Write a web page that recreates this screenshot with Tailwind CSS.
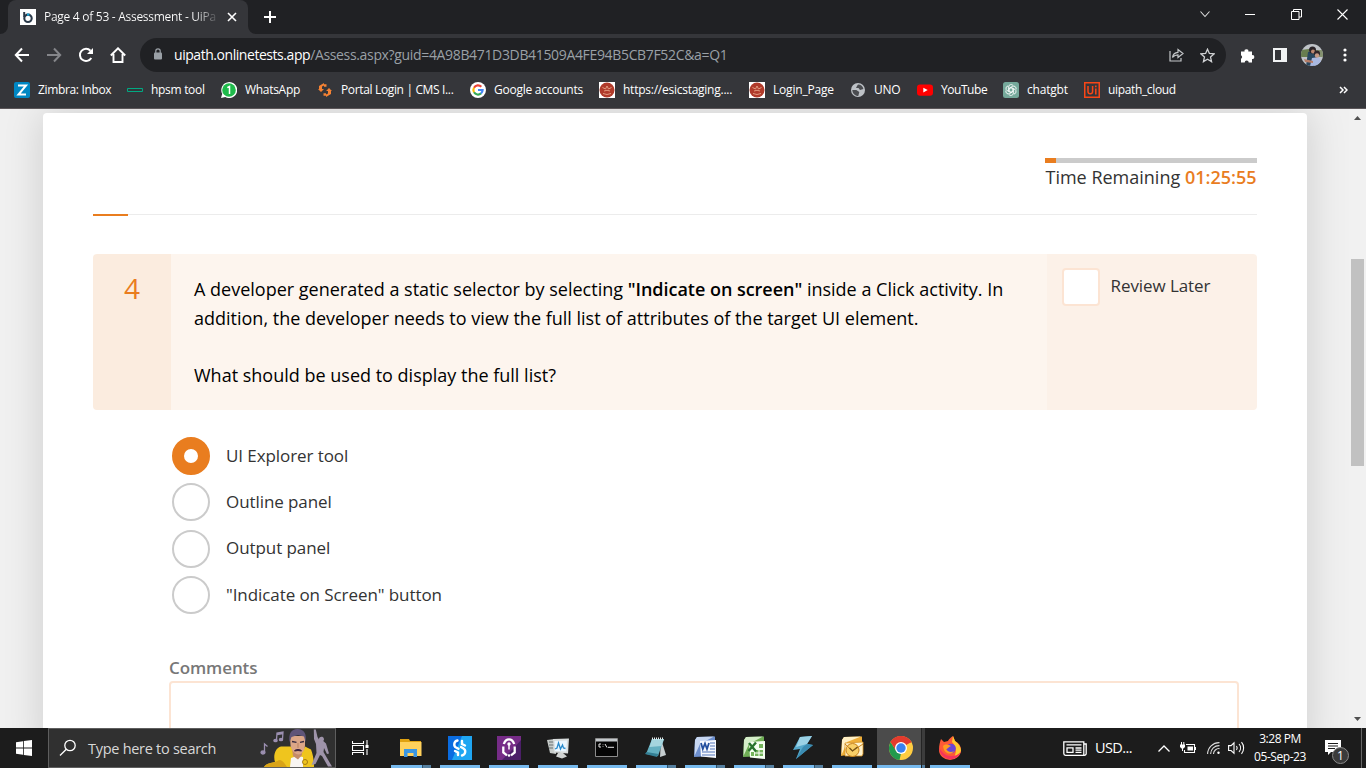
<!DOCTYPE html>
<html lang="en">
<head>
<meta charset="utf-8">
<title>Page 4 of 53 - Assessment - UiPath</title>
<script src="https://cdn.jsdelivr.net/npm/@tailwindcss/browser@4"></script>
</head>
<body class="w-[1366px] h-[768px] overflow-hidden flex flex-col bg-[#f0f0f0] font-['Open_Sans','Noto_Sans',sans-serif]">

<!-- Tab strip -->
<header class="h-[34px] shrink-0 bg-[#202124] flex items-start text-white">
  <svg class="w-2 h-[34px] shrink-0" viewBox="0 0 8 34"><path d="M8 26v8H0a8 8 0 0 0 8-8z" fill="#35363a"/></svg>
  <div class="w-[240px] h-[34px] bg-[#35363a] rounded-t-lg flex items-center pl-3 pr-2">
    <svg class="w-4 h-4 shrink-0" viewBox="0 0 16 16"><path fill="#fff" d="M0 0h16v16H0z"/><path d="M4.2 3v5" stroke="#2b3a4a" stroke-width="2"/><circle cx="8" cy="9.3" r="3.7" fill="none" stroke="#2b3a4a" stroke-width="2.1"/><path d="M7 4.5h2.4v2.2H7z" fill="#19a3d6"/></svg>
    <span class="ml-2 w-[176px] h-4 leading-4 text-[12px] tracking-[-0.28px] whitespace-nowrap overflow-hidden bg-gradient-to-r from-white from-85% to-transparent bg-clip-text text-transparent">Page 4 of 53 - Assessment - UiPa</span>
    <svg class="w-[10px] h-[10px] ml-[7px] shrink-0" viewBox="0 0 10 10"><path d="M1 1l8 8M9 1l-8 8" stroke="#fff" stroke-width="1.6"/></svg>
  </div>
  <svg class="w-2 h-[34px] shrink-0" viewBox="0 0 8 34"><path d="M0 26v8h8a8 8 0 0 1-8-8z" fill="#35363a"/></svg>
  <svg class="w-3 h-3 mt-[11px] ml-2" viewBox="0 0 12 12"><path d="M6 0v12M0 6h12" stroke="#fff" stroke-width="2"/></svg>
  <div class="ml-auto mr-[18px] mt-2 flex items-center">
    <svg class="w-3 h-3 mr-[34px]" viewBox="0 0 12 12"><path d="M1.5 3.5L6 8.5l4.500-5" fill="none" stroke="#ddd" stroke-width="1.1"/></svg>
    <svg class="w-[10px] h-[10px] mr-[36px]" viewBox="0 0 10 10"><path d="M0 5.500h10" stroke="#fff"/></svg>
    <svg class="w-[11px] h-[11px] mr-[35px]" viewBox="0 0 11 11"><path d="M.5 2.500h7.500v8H.5zM2.500 2.500v-2h8v7.500H8" fill="none" stroke="#fff"/></svg>
    <svg class="w-[11px] h-[11px]" viewBox="0 0 11 11"><path d="M.5.5l10 10M10.500.5l-10 10" stroke="#fff" stroke-width="1.1"/></svg>
  </div>
</header>

<!-- Toolbar -->
<nav class="h-[42px] shrink-0 bg-[#35363a] flex items-center pl-[14px] pr-[16px]">
  <svg class="w-4 h-4" viewBox="0 0 16 16" fill="none" stroke="#fff" stroke-width="2"><path d="M15 8H2M8 1.500L1.800 8 8 14.500"/></svg>
  <svg class="w-4 h-4 ml-4" viewBox="0 0 16 16" fill="none" stroke="#85868a" stroke-width="2"><path d="M1 8h13M8 1.500L14.200 8 8 14.500"/></svg>
  <svg class="w-4 h-4 ml-4" viewBox="0 0 16 16"><path d="M13.300 11a6.100 6.100 0 1 1-.8-7.300" fill="none" stroke="#fff" stroke-width="2"/><path d="M15 1v6H9z" fill="#fff"/></svg>
  <svg class="w-4 h-4 ml-4" viewBox="0 0 16 16"><path d="M3.500 7v8h9V7M.8 8.500L8 1.300l7.200 7.200" fill="none" stroke="#fff" stroke-width="1.900"/></svg>
  <div class="ml-[14px] w-[1086px] h-[34px] rounded-full bg-[#202124] flex items-center pl-[14px] pr-[11px]">
    <svg class="w-2 h-3 shrink-0 -mt-[2px]" viewBox="0 0 8 12"><rect y="4.500" width="8" height="7" rx="1" fill="#9aa0a6"/><path d="M1.800 5V3a2.200 2.200 0 0 1 4.400 0v2" fill="none" stroke="#9aa0a6" stroke-width="1.200"/></svg>
    <span class="ml-3 text-[14px] leading-5 text-[#9aa0a6] whitespace-nowrap"><span class="text-white tracking-[-0.450px]">uipath.onlinetests.app</span><span class="tracking-[-0.340px]">/Assess.aspx?guid=4A98B471D3DB41509A4FE94B5CB7F52C&amp;a=Q1</span></span>
    <svg class="w-[15px] h-[14px] ml-auto" viewBox="0 0 15 14" fill="none" stroke="#c4c7c9" stroke-width="1.200"><path d="M1 3v10h11v-3M3.500 9.500C4 6 6 4.500 9 4.300V1.500L14 5.500 9 9.500V6.800C6.500 6.800 5 7.500 3.500 9.500z"/></svg>
    <svg class="w-[15px] h-[15px] ml-[16px]" viewBox="0 0 15 15"><path d="M7.500 1.200l1.900 4.300 4.600.4-3.500 3.100 1.050 4.600L7.500 11.200l-4.050 2.400L4.500 9 1 5.900l4.600-.4z" fill="none" stroke="#d0d2d4" stroke-width="1.300"/></svg>
  </div>
  <svg class="w-[15px] h-[15px] ml-[14px]" viewBox="0 0 15 15" fill="#fff"><path d="M1 3.500h3.600a1.900 1.900 0 1 1 3.700 0H12v3.700a1.900 1.900 0 1 1 0 3.700v3.600H8.700a2 2 0 0 0-4 0H1v-3.700a2 2 0 0 0 0-3.600z"/></svg>
  <svg class="w-[14px] h-[14px] ml-[18px]" viewBox="0 0 14 14"><path d="M0 0h14v14H0zM2 2v10h6V2z" fill="#f1f3f4" fill-rule="evenodd"/></svg>
  <svg class="w-[22px] h-[22px] ml-[14px]" viewBox="0 0 22 22"><defs><clipPath id="av"><circle cx="11" cy="11" r="11"/></clipPath></defs><g clip-path="url(#av)"><path fill="#bfc3c8" d="M0 0h22v22H0z"/><path d="M0 6l8-1v8H0z" fill="#687d4e"/><path d="M15 6h7v7h-7z" fill="#84916f"/><path d="M5 22l2-14 6-1 3 6-3 9z" fill="#28475f"/><circle cx="11.500" cy="6" r="3.500" fill="#292226"/><circle cx="12" cy="7.500" r="2" fill="#b98770"/><path d="M9 22l2-8 7-1 4 9z" fill="#a9b8e0"/><circle cx="16" cy="9.500" r="3" fill="#30262a"/><circle cx="16" cy="11.500" r="2.200" fill="#c59a86"/><path d="M3 15l9 2v2l-8-1z" fill="#b57d68"/></g></svg>
  <svg class="w-1 h-[14px] ml-auto mr-[3px]" viewBox="0 0 4 14" fill="#fff"><circle cx="2" cy="2" r="1.600"/><circle cx="2" cy="7" r="1.600"/><circle cx="2" cy="12" r="1.600"/></svg>
</nav>

<!-- Bookmarks -->
<nav class="h-[33px] shrink-0 bg-[#35363a] border-b border-[#5b5659] flex items-center gap-4 pl-[14px] pr-[17px] pb-[4px] text-[12px] text-white whitespace-nowrap leading-4">
  <div class="w-[97px] flex gap-2 tracking-[-0.350px]"><svg class="w-4 h-4 shrink-0" viewBox="0 0 16 16"><rect width="16" height="16" rx="2" fill="#0087c3"/><path d="M4 3.500h8L4.500 12.500H12" fill="none" stroke="#fff" stroke-width="2"/></svg>Zimbra: Inbox</div>
  <div class="w-[78px] flex gap-2 tracking-[-0.3px]"><svg class="w-4 h-4 shrink-0" viewBox="0 0 16 16"><path d="M.5 6.500h15v3H.5z" fill="none" stroke="#01a982"/></svg>hpsm tool</div>
  <div class="w-20 flex gap-2 tracking-[-0.3px]"><svg class="w-4 h-4 shrink-0" viewBox="0 0 16 16"><path d="M0 16l1.200-4.200A8 8 0 1 1 4.300 15z" fill="#fff"/><circle cx="8" cy="8" r="6.800" fill="#1fba4b"/><path d="M6.300 5.700L8.500 4.500V12" fill="none" stroke="#fff" stroke-width="1.500"/></svg>WhatsApp</div>
  <div class="w-[137px] flex gap-2 tracking-[-0.350px]"><svg class="w-4 h-4 shrink-0" viewBox="0 0 16 16" fill="#f58233"><path d="M2 4l5-3v2.500L5 4.500V7h2L4 10 1 7h1zM14 12l-5 3v-2.500l2-1V9H9l3-3 3 3h-1z"/><path d="M7 2.200h2.500v2.500H7zM6.500 11.300H9v2.500H6.500z"/></svg>Portal Login | CMS I...</div>
  <div class="w-[113px] flex gap-2 tracking-[-0.250px]"><svg class="w-4 h-4 shrink-0" viewBox="0 0 16 16" fill="none" stroke-width="2.200"><circle cx="8" cy="8" r="8" fill="#fff"/><path d="M11.300 4.800A4.600 4.600 0 0 0 4 5.700" stroke="#ea4335"/><path d="M4 5.700a4.600 4.600 0 0 0 0 4.600" stroke="#fbbc05"/><path d="M4 10.300a4.600 4.600 0 0 0 7 1.100" stroke="#34a853"/><path d="M11 11.400A4.600 4.600 0 0 0 12.600 8H8" stroke="#4285f4"/></svg>Google accounts</div>
  <div class="w-[134px] flex gap-2 tracking-[-0.250px]"><svg class="w-4 h-4 shrink-0" viewBox="0 0 16 16"><path fill="#fff" d="M0 0h16v16H0z"/><circle cx="8" cy="8" r="7.500" fill="#b03a2a"/><path d="M3.500 5.500l3 1.500L8 4l1.500 3 3-1.500M5 9q3-1.500 6 0M4 11.500q4 2 8 0" fill="none" stroke="#e39a80"/></svg>https://esicstaging....</div>
  <div class="w-[85px] flex gap-2 tracking-[-0.2px]"><svg class="w-4 h-4 shrink-0" viewBox="0 0 16 16"><path fill="#fff" d="M0 0h16v16H0z"/><circle cx="8" cy="8" r="7.500" fill="#b03a2a"/><path d="M3.500 5.500l3 1.500L8 4l1.500 3 3-1.500M5 9q3-1.500 6 0M4 11.500q4 2 8 0" fill="none" stroke="#e39a80"/></svg>Login_Page</div>
  <div class="w-[51px] flex gap-2 tracking-[-0.3px]"><svg class="w-4 h-4 shrink-0" viewBox="0 0 16 16"><circle cx="8" cy="8" r="7" fill="#bdc1c6"/><path d="M8 2.500c3 0 5 2 5.400 4.500L10 8 8.500 6H6l1-2zM2.300 8h4l3 2-1 4C5 14 2.500 11.500 2.300 8z" fill="#4a4c50"/></svg>UNO</div>
  <div class="w-[70px] flex gap-2 tracking-[-0.450px]"><svg class="w-4 h-4 shrink-0" viewBox="0 0 16 16"><rect y="2.500" width="16" height="11.200" rx="3" fill="#f00"/><path d="M6.300 5.700L10.700 8l-4.400 2.400z" fill="#fff"/></svg>YouTube</div>
  <div class="w-[65px] flex gap-2 tracking-[-0.2px]"><svg class="w-4 h-4 shrink-0" viewBox="0 0 16 16"><rect width="16" height="16" rx="2.500" fill="#75a99b"/><g fill="none" stroke="#fff" stroke-width=".8"><path id="k" d="M8 10.200L5.600 8.800V5a2.500 2.500 0 0 1 4.500-1.500"/><use href="#k" transform="rotate(60 8 8)"/><use href="#k" transform="rotate(120 8 8)"/><use href="#k" transform="rotate(180 8 8)"/><use href="#k" transform="rotate(240 8 8)"/><use href="#k" transform="rotate(300 8 8)"/></g></svg>chatgbt</div>
  <div class="w-[92px] flex gap-2 tracking-[-0.350px]"><svg class="w-4 h-4 shrink-0" viewBox="0 0 16 16" fill="none" stroke="#fa4616"><path d="M.75.75h14.500v14.500H.75z" stroke-width="1.500"/><path d="M4 4v5.500a2.300 2.300 0 0 0 4.600 0V4M11.800 6.500v6M11.800 3.500v1.700" stroke-width="1.500"/></svg>uipath_cloud</div>
  <svg class="w-[9px] h-2 ml-auto mr-px" viewBox="0 0 9 8" fill="none" stroke="#fff" stroke-width="1.500"><path d="M1 1l3 3-3 3M5 1l3 3-3 3"/></svg>
</nav>

<!-- Page viewport -->
<div class="h-[619px] shrink-0 flex overflow-hidden">
  <main class="w-[1349px] h-full overflow-hidden pl-[43px] pt-1">
    <div class="w-[1264px] h-[640px] bg-white rounded-t shadow-[0_0_40px_rgba(0,0,0,0.15)] px-[50px] pt-[45px]">
      <div class="w-[212px] ml-auto">
        <div class="h-[5px] bg-[#cbcbcb]"><div class="w-[11px] h-full bg-[#e97d1f]"></div></div>
        <p class="h-[29px] leading-[29px] pl-[0.500px] text-[18px] text-[#333] whitespace-nowrap">Time Remaining <span class="font-semibold text-[#e97d1f]">01:25:55</span></p>
      </div>
      <div class="mt-[22px] h-[2px] flex items-start"><div class="w-[35px] h-[2px] bg-[#e97d1f]"></div><div class="flex-1 h-px bg-[#ececec]"></div></div>

      <section class="mt-[38px] h-[156px] rounded flex overflow-hidden">
        <div class="w-[78px] bg-[#fbecdf] text-center text-[28px] leading-[28px] pt-[20px] font-medium text-[#e97d1f]">4</div>
        <div class="w-[876px] bg-[#fdf5ee] pl-[23px] pt-[21px] text-[18px] leading-[28.8px] text-black whitespace-nowrap">A developer generated a static selector by selecting <b class="font-semibold tracking-[-0.030px]">"Indicate on screen"</b> inside a Click activity. In<br>addition, the developer needs to view the full list of attributes of the target UI element.<br><br>What should be used to display the full list?</div>
        <div class="flex-1 bg-[#fcf1e8] pl-[15px] pt-[14px] flex items-start gap-[10.500px]">
          <span class="w-[38px] h-[38px] bg-white border-2 border-[#fce4d3] rounded"></span>
          <span class="text-[17px] leading-[36px] tracking-[-0.080px] text-[#333]">Review Later</span>
        </div>
      </section>

      <ul class="mt-[27px] ml-[79px] flex flex-col gap-[8.300px] text-[17px] tracking-[-0.080px] text-[#333]">
        <li class="h-[38px] flex items-center gap-4"><span class="w-[38px] h-[38px] rounded-full border-[12px] border-[#e97d1f]"></span><span class="w-[300px] leading-6">UI Explorer tool</span></li>
        <li class="h-[38px] flex items-center gap-4"><span class="w-[38px] h-[38px] rounded-full border-2 border-[#cbcbcb]"></span><span class="w-[300px] leading-6">Outline panel</span></li>
        <li class="h-[38px] flex items-center gap-4"><span class="w-[38px] h-[38px] rounded-full border-2 border-[#cbcbcb]"></span><span class="w-[300px] leading-6 pb-[2px]">Output panel</span></li>
        <li class="h-[38px] flex items-center gap-4"><span class="w-[38px] h-[38px] rounded-full border-2 border-[#cbcbcb]"></span><span class="w-[300px] leading-6">"Indicate on Screen" button</span></li>
      </ul>

      <div class="mt-[42px] ml-[76px] w-[1070px]">
        <p class="h-[25px] leading-6 text-[17px] font-semibold tracking-[-0.1px] text-[#777]">Comments</p>
        <div class="h-[120px] border-2 border-[#fce4d3] rounded"></div>
      </div>
    </div>
  </main>
  <aside class="w-[17px] h-full bg-[#f1f1f1] flex flex-col items-center">
    <svg class="w-[17px] h-[17px]" viewBox="0 0 17 17"><path d="M5 11l3.500-4 3.500 4z" fill="#505050"/></svg>
    <div class="mt-[133px] w-[13px] h-[207px] bg-[#c1c1c1]"></div>
    <svg class="w-[17px] h-[17px] mt-auto" viewBox="0 0 17 17"><path d="M5 6l3.500 4L12 6z" fill="#505050"/></svg>
  </aside>
</div>

<!-- Taskbar -->
<footer class="h-10 shrink-0 bg-[#1c1c1c] flex items-stretch text-white">
  <div class="w-12 flex items-center justify-center"><svg class="w-4 h-4" viewBox="0 0 16 16" fill="#fff"><path d="M0 2.200L7 1.200v6.400H0zM7.800 1.100L16 0v7.600H7.800zM0 8.400h7v6.400L0 13.800zM7.800 8.400H16V16l-8.200-1.100z"/></svg></div>
  <div class="w-[288px] bg-[#303030] border border-[#5e5e5e] flex items-center pl-[10px] overflow-hidden">
    <svg class="w-[18px] h-[18px]" viewBox="0 0 18 18" fill="none" stroke="#fff" stroke-width="1.300"><circle cx="11" cy="6.500" r="5.200"/><path d="M7.300 10.200L1 16.500"/></svg>
    <span class="ml-[11px] pt-[2px] text-[14.500px] tracking-[-0.280px] text-[#d8d8d8] whitespace-nowrap">Type here to search</span>
    <svg class="w-[76px] h-[38px] ml-auto mr-0 shrink-0" viewBox="0 0 76 38"><g stroke="#9b8fb0" stroke-width="1.300" fill="#9b8fb0"><path d="M5.500 23v-8l3 2.500" fill="none"/><ellipse cx="4" cy="23.500" rx="2" ry="1.500"/><path d="M17.500 11l.5-7 6-1-.5 7M18 5.500l6-1" fill="none"/><ellipse cx="16.500" cy="11.500" rx="1.600" ry="1.200"/><ellipse cx="22" cy="10.500" rx="1.600" ry="1.200"/></g>
      <path d="M5 38c2-3 6-4 11-5-2-6 0-14 6-15.500h10l8 12 6-12 6 3c2 5 3 11 3 17.500z" fill="#efc51e"/><path d="M5 38c3-5 9-3 15-7 4 0 6 4 8 7z" fill="#d9a317"/><path d="M32 29l6-2 6 1v10H31z" fill="#f8f5f2"/><path d="M33 19l10 1v6l-4 4.500-5-3.500z" fill="#c58b68"/><path d="M31 7h15v9c0 5-3 9.500-6.500 9.500S32 21 31.500 16z" fill="#dca687"/><path d="M30.500 13C29.500 5 32 0 38.500 0S48 5 46.500 13L45 7.500l-6-1.500-6.500 2z" fill="#5f5478"/><path d="M33 12.500l4.500.8M41 13.300l4-.8" stroke="#382b40" stroke-width="1.300"/><path d="M39 14v5" stroke="#b98263"/><path d="M35.500 22c.5-2 6.500-2 7 0l-3.500-.5z" fill="#3a2440" stroke="#3a2440"/><circle cx="46" cy="33" r="2.500" fill="none" stroke="#a57a10"/>
      <path d="M54.800.5h2l1.700 7.500 1.500 2.500a2.500 2.500 0 1 1 4.200 1.500l2.800 2.500 3 10-2 .5-3-6-.5 4 3.500 6 5 8.500h-4L63 27l-2-1-4.500 9-4 1 5-12-.5-9-2-5z" fill="#9f94aa"/></svg>
  </div>
  <div class="w-[51px] flex items-center pl-4"><svg class="w-[17px] h-4" viewBox="0 0 17 16" fill="none" stroke="#fff" stroke-width="1.100"><path d="M.5 1v2.500h11V1M.5 15v-2.500h11V15M.5 5.500h11v5H.5zM15 0v5M15 9v6"/><path d="M13.500 5h3v3h-3z" fill="#fff" stroke="none"/></svg></div>

  <div class="flex gap-px">
    <div class="w-12 flex flex-col items-center"><svg class="w-6 h-6 mt-2 mb-[5px] shrink-0" viewBox="0 0 24 24"><path d="M1 3h9l1 2h11v6H1z" fill="#e0a211"/><path d="M1 6h21.500v14H1z" fill="#ffd15c"/><path d="M5 13h13v8h-3.500v-4h-6v4H5z" fill="#3a96e2"/></svg><div class="w-10 h-[3px] flex"><i class="w-[31px] bg-[#76b9ed]"></i><i class="flex-1 bg-[#557f9f] border-l border-[#2f5068]"></i></div></div>
    <div class="w-12 flex flex-col items-center"><svg class="w-6 h-6 mt-2 mb-[5px] shrink-0" viewBox="0 0 24 24"><path fill="#0a6ce0" d="M0 0h24v24H0z"/><path fill="#1fa6f2" d="M14 0h10v24H4z"/><g fill="none" stroke="#fff" stroke-width="2.400" stroke-linecap="round"><path d="M9.500 4.500C5.500 5.500 5.500 10 8 11.500l2.500 1.300M14 19.500c4-1 4-5.500 1.500-7L13 11"/><path d="M14 5v3l3 1.500M10 19v-2.500L7 15"/></g></svg><div class="w-10 h-[3px] bg-[#76b9ed]"></div></div>
    <div class="w-12 flex flex-col items-center"><svg class="w-6 h-6 mt-2 mb-[5px] shrink-0" viewBox="0 0 24 24"><path fill="#762c87" d="M0 0h24v24H0z"/><path fill="#4b1f68" d="M24 4v20H5l11-11z"/><path d="M6.300 10.500v6l3.700 2.800M17.700 10.500v6L14 19.300M6.800 8C8 4.500 9.500 3.300 12 3.300S16 4.500 17.200 8" fill="none" stroke="#fff" stroke-width="2.300"/><circle cx="12" cy="8" r="1.700" fill="#fff"/><path d="M12 9v4.500" stroke="#fff" stroke-width="1.500"/><circle cx="12" cy="19.500" r="1.300" fill="#fff"/></svg><div class="w-10 h-[3px] bg-[#76b9ed]"></div></div>
    <div class="w-12 flex flex-col items-center"><svg class="w-6 h-6 mt-2 mb-[5px] shrink-0" viewBox="0 0 24 24"><path d="M1 4l8-1 1 15-6-1z" fill="#c6cbc9"/><path d="M3 6h5M3 9h5M3 12h4" stroke="#697073"/><path d="M7 3l16-.5-1 15-14-1z" fill="#d9dddd"/><path d="M8.500 5l12.500-.5-.8 11L9 15z" fill="#eaf6ff"/><path d="M9 13l2-1 1.500-5 2 6 2-4 1 3 2 .5" fill="none" stroke="#2a8bcc" stroke-width="1.300"/><path d="M12 17h5l4 3.500-5 2-6-2z" fill="#d0d3d2"/></svg><div class="w-10 h-[3px] bg-[#76b9ed]"></div></div>
    <div class="w-12 flex flex-col items-center"><svg class="w-6 h-6 mt-2 mb-[5px] shrink-0" viewBox="0 0 24 24"><path d="M.5 2.500h22v18H.5z" fill="#050505" stroke="#8c8c8c"/><path d="M1 3h21v2.500H1z" fill="#c4c9cc"/><path d="M6 8H4v3h2M8 8.500v.6M8 10.400v.6M10 8l2 3.500M13 11.300h6" fill="none" stroke="#e8e8e8"/></svg><div class="w-10 h-[3px] bg-[#76b9ed]"></div></div>
    <div class="w-12 flex flex-col items-center"><svg class="w-6 h-6 mt-2 mb-[5px] shrink-0" viewBox="0 0 24 24"><path d="M17 3l5 16-6 2z" fill="#c6ced0"/><path d="M8 3h12l-6 17-12-2z" fill="#65b0c1"/><path d="M8 3h12l-2.500 7-12 1z" fill="#a5d5de"/><path d="M1 18l12 3 1.500-3-12-2z" fill="#347f94"/><path d="M8 2.500h12" stroke="#e9eeee" stroke-width="1.800" stroke-dasharray="1 1"/></svg><div class="w-10 h-[3px] flex"><i class="w-[31px] bg-[#76b9ed]"></i><i class="flex-1 bg-[#557f9f] border-l border-[#2f5068]"></i></div></div>
    <div class="w-12 flex flex-col items-center"><svg class="w-6 h-6 mt-2 mb-[5px] shrink-0" viewBox="0 0 24 24"><path d="M4 1l18-.5V20l-21 1L2 4z" fill="#6d8fce"/><path d="M4 1l17-.4L7 8 1.500 20 2 4z" fill="#c7d7f2"/><path d="M7 5l16-1v18l-15-1.500z" fill="#f6f9ff"/><path d="M8 7l1.800 6L12 7.500l2 5.500L16 7" fill="none" stroke="#234f9f" stroke-width="1.800"/><path d="M17 7h5M17 10h5M17 13h5M9 16h13M9 19h13" stroke="#5376bb" stroke-width="1.200"/></svg><div class="w-10 h-[3px] flex"><i class="w-[31px] bg-[#76b9ed]"></i><i class="flex-1 bg-[#557f9f] border-l border-[#2f5068]"></i></div></div>
    <div class="w-12 flex flex-col items-center"><svg class="w-6 h-6 mt-2 mb-[5px] shrink-0" viewBox="0 0 24 24"><path d="M4 1l18-.5V20l-21 1L2 4z" fill="#6fae55"/><path d="M4 1l17-.4L7 8 1.500 20 2 4z" fill="#d4edc8"/><path d="M7 6l16-1v18l-15-1.500z" fill="#f5fff1"/><path d="M13 14h8v6h-8zM9 16h3v4H9zM17 8h4v4h-4z" fill="#74b45b"/><path d="M13 17h8M17 14v6" stroke="#fff"/><path d="M7 7l7 8.500M14 6.500L6.500 15" stroke="#28732d" stroke-width="2.400"/></svg><div class="w-10 h-[3px] flex"><i class="w-[31px] bg-[#76b9ed]"></i><i class="flex-1 bg-[#557f9f] border-l border-[#2f5068]"></i></div></div>
    <div class="w-12 flex flex-col items-center"><svg class="w-6 h-6 mt-2 mb-[5px] shrink-0" viewBox="0 0 24 24"><path d="M9 1l12-1-5 8 6 1L5 23l4-10-7 1z" fill="#55a9cc"/><path d="M9 1l12-1-5 8-11 3z" fill="#9bd2e6"/><path d="M16 8l6 1L5 23l7-12z" fill="#3b8cb2"/></svg><div class="w-10 h-[3px] flex"><i class="w-[31px] bg-[#76b9ed]"></i><i class="flex-1 bg-[#557f9f] border-l border-[#2f5068]"></i></div></div>
    <div class="w-12 flex flex-col items-center"><svg class="w-6 h-6 mt-2 mb-[5px] shrink-0" viewBox="0 0 24 24"><path d="M4 1l18-.5V16L1 20 2 4z" fill="#efae38"/><path d="M4 1l17-.4L7 6 1.500 19 2 4z" fill="#fff0c6"/><path d="M5 7l18-1v12l-1 2H5z" fill="#fff3cf" stroke="#d99422" stroke-width=".8"/><circle cx="12.500" cy="14" r="6.500" fill="#f9cf67" stroke="#c98219"/><path d="M5 8l7.500 7L23 8" fill="none" stroke="#c98219"/><path d="M9.500 12l3 3 5-4" fill="none" stroke="#755217" stroke-width="1.300"/></svg><div class="w-10 h-[3px] bg-[#76b9ed]"></div></div>
    <div class="w-12 flex bg-[#4b4b4b]"><div class="w-[44px] flex flex-col items-center"><svg class="w-6 h-6 mt-2 mb-[5px] ml-1 shrink-0" viewBox="0 0 24 24"><circle cx="12" cy="12" r="12" fill="#ffcd41"/><path d="M12 12L1.600 6A12 12 0 0 1 22.400 6z" fill="#e33b2e"/><path d="M1.600 6l5.800 9L12 17.500 10.500 24A12 12 0 0 1 1.600 6z" fill="#229a4d"/><path d="M12 6.500h10.500A12 12 0 0 0 1.600 6l5.600 9z" fill="#e33b2e"/><circle cx="12" cy="12" r="6" fill="#fff"/><circle cx="12" cy="12" r="4.700" fill="#3a82f0"/></svg><div class="w-full h-[3px] bg-[#76b9ed]"></div></div><div class="flex-1 border-l border-[#242424] bg-[#3c3c3c] pt-[37px]"><div class="h-[3px] bg-[#557f9f]"></div></div></div>
    <div class="w-12 flex flex-col items-center"><svg class="w-6 h-6 mt-2 mb-[5px] shrink-0" viewBox="0 0 24 24"><path d="M3 3l3 3 4-1c1-2 3-4 5-5l2 5c4 2 6 5 6 9a11 10 0 0 1-22 0C1 9 2 6 3 3z" fill="#ff5a36"/><path d="M15 0l2 5c4 3 6 6 6 10-2 5-5 7-8 8 4-6 4-12-1-17z" fill="#ffcb2e"/><path d="M1 12c1 8 8 12 14 11 4-1 7-4 8-8-2 4-6 5-10 5-7 0-9-5-12-8z" fill="#f5335d"/><circle cx="13" cy="12.500" r="4.800" fill="#6b46d5"/><path d="M5 10c3-3 6-1 8 0-3 1-3 3-5 3 2 3 5 4 8 2-2 4-10 4-11-5z" fill="#ff9d21"/></svg><div class="w-10 h-[3px] bg-[#76b9ed]"></div></div>
  </div>

  <div class="ml-auto flex items-center">
    <svg class="w-6 h-[15px]" viewBox="0 0 24 15" fill="none" stroke="#fff" stroke-width="1.300"><path d="M.8.8h20v13.500H2.500a1.700 1.700 0 0 1-1.700-1.700zM20.800 3h2.400v9.500a1.800 1.800 0 0 1-1.800 1.800M3.500 3.800h15M4 6.800h6v4.500H4zM12.500 7h6M12.500 9.200h6M12.500 11.400h6"/></svg>
    <span class="ml-2 w-[37px] text-[14.500px] tracking-[-0.6px]">USD...</span>
    <svg class="w-3 h-[7px] ml-[26px]" viewBox="0 0 12 7"><path d="M.5 6.500L6 1l5.500 5.500" fill="none" stroke="#fff" stroke-width="1.300"/></svg>
    <svg class="w-4 h-3 ml-[10px]" viewBox="0 0 16 12"><path d="M6 2.500h8.500v8H4.500V8" fill="none" stroke="#fff" stroke-width="1.100"/><path d="M7.500 4.500h5.500v4H7.500zM15 5h1v3h-1zM0 2.500h5v2.500L3.500 6.500h-2L0 5zM1 0h1v3H1zM3.300 0h1v3h-1zM2 6h1v3H2z" fill="#fff"/></svg>
    <svg class="w-[14px] h-3 ml-[11px]" viewBox="0 0 14 12" fill="none" stroke="#ddd" stroke-width="1.100"><path d="M.6 12A11.500 11.500 0 0 1 12.500.6M3.600 12a8.500 8.500 0 0 1 8.900-8.400M6.500 12a5.500 5.500 0 0 1 6-5.400"/><circle cx="11.500" cy="10.700" r="1.200" fill="#fff" stroke="none"/></svg>
    <svg class="w-[17px] h-[14px] ml-[7px]" viewBox="0 0 17 14" fill="none" stroke="#fff" stroke-width="1.100"><path d="M.6 4.600h2.500L6 1.800v10.500L3.100 9.500H.6zM8.500 5a3.500 3.500 0 0 1 0 4M11 3a6 6 0 0 1 0 8M13.500 1.200a9 9 0 0 1 0 11.600"/></svg>
    <div class="w-[56px] ml-[7px] mr-px text-[12px] leading-[18px] text-center whitespace-nowrap tracking-[-0.450px]"><p>3:28 PM</p><p>05-Sep-23</p></div>
    <div class="relative w-4 h-4 ml-[16px]"><svg class="w-4 h-4" viewBox="0 0 16 16"><path d="M0 0h16v12H6l-3 3v-3H0z" fill="#fff"/><path d="M3 3.500h10M3 6h10M3 8.500h7" stroke="#1c1c1c" stroke-width="1.100"/></svg>
      <span class="absolute left-[7px] top-[7px] w-[17px] h-[17px] rounded-full bg-[#3b3b3b] border border-[#8b8b8b] text-[12px] leading-[15px] text-center">1</span></div>
    <div class="ml-[20px] w-[5px] h-10 border-l border-[#666]"></div>
  </div>
</footer>
</body>
</html>
